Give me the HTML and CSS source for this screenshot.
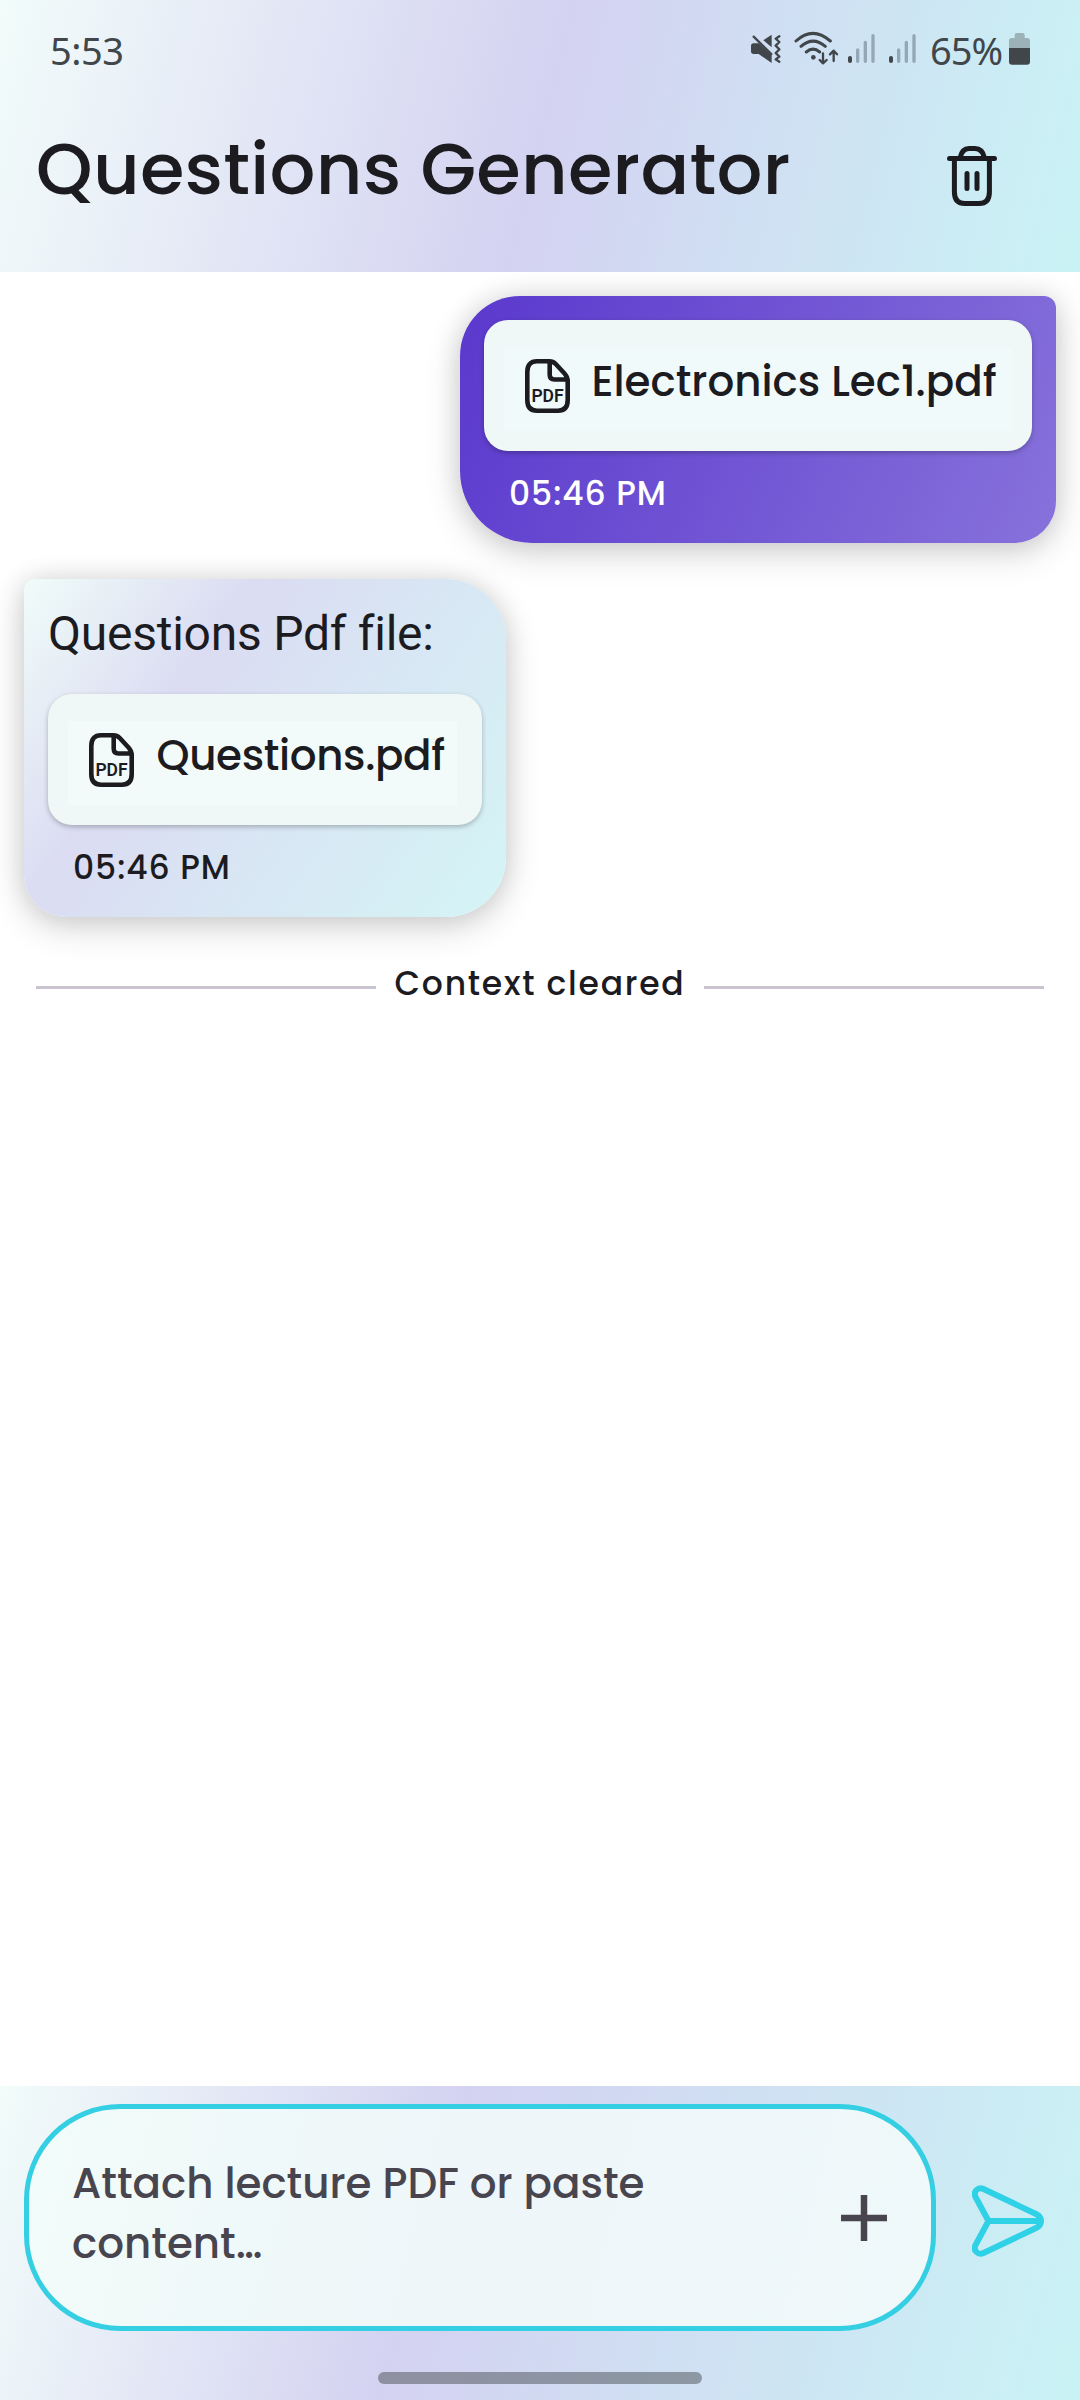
FILE: index.html
```html
<!DOCTYPE html>
<html lang="en">
<head>
<meta charset="utf-8">
<title>Questions Generator</title>
<link rel="stylesheet" href="styles.css">
</head>
<body>
<header class="header">
  <div class="status">
    <span class="clock">5:53</span>
    <div class="tray">
      <svg class="mute" viewBox="90 60 96 108">
        <path fill="currentColor" d="M93 108Q93 100 101 100H116L155 135V159L116 132H101Q93 132 93 124ZM130 91L155 74V112Z"/>
        <path fill="none" stroke="currentColor" stroke-width="7" stroke-linecap="round" stroke-linejoin="round" d="M101 80L154 132M178 79L167 86L178 96L167 107L178 118L167 129L178 140L167 148L178 155"/>
      </svg>
      <svg class="wifi" viewBox="219 60 141 108">
        <g fill="none" stroke="currentColor" stroke-width="9" stroke-linecap="round" stroke-linejoin="round">
          <path d="M228 93Q278 47 331 93M243 109Q279 78 316 109M259 126Q279 109 299 126"/>
          <path stroke-width="7" d="M309 130V160M299 150L309 160L320 150M341 153V122M330 133L341 122L351 133"/>
        </g>
        <circle cx="280" cy="142" r="7" fill="currentColor"/>
      </svg>
      <svg class="bars" viewBox="381 60 87 108">
        <path class="on" d="M390 144V153"/>
        <path class="off" d="M413 120V154M436 97V154M459 77V154"/>
      </svg>
      <svg class="bars bars-second" viewBox="381 60 87 108">
        <path class="on" d="M390 144V153"/>
        <path class="off" d="M413 120V154M436 97V154M459 77V154"/>
      </svg>
      <span class="percent">65%</span>
      <svg class="battery" viewBox="864 60 69 108">
        <path class="level-empty" d="M867 114V92Q867 84 875 84H884V75Q884 69 890 69H908Q914 69 914 75V84H922Q930 84 930 92V114Z"/>
        <path fill="currentColor" d="M867 114H930V155Q930 164 921 164H876Q867 164 867 155Z"/>
      </svg>
    </div>
  </div>
  <div class="titlebar">
    <h1>Questions Generator</h1>
    <svg class="trash" viewBox="0 0 50 60" fill="none" stroke="currentColor" stroke-width="5" stroke-linecap="round">
      <path d="M2.500 12.500H47.500M13 12Q15 2.500 22 2.500H28Q35.500 2.500 37.500 12M7.400 13V46Q7.400 57.500 18 57.500H32Q42.400 57.500 42.400 46V13M20 27.500V42.500M30 27.500V42.500"/>
    </svg>
  </div>
</header>

<main class="chat">
  <section class="bubble sent">
    <div class="file">
      <div class="file-inner">
        <svg class="pdf" viewBox="0 0 45 54">
          <path d="M12 2.300H24.500Q28 2.300 30.500 4.800L39.500 14.500Q42.700 18 42.700 22V41Q42.700 51.700 33 51.700H12Q2.300 51.700 2.300 41V13Q2.300 2.300 12 2.300ZM24.700 2.500V15.500Q24.700 20.500 29.500 20.500H42"/>
          <text x="6.500" y="43" textLength="32" lengthAdjust="spacing">PDF</text>
        </svg>
        <span class="name">Electronics Lec1.pdf</span>
      </div>
    </div>
    <time>05:46 PM</time>
  </section>
  <section class="bubble received">
    <p>Questions Pdf file:</p>
    <div class="file">
      <div class="file-inner">
        <svg class="pdf" viewBox="0 0 45 54">
          <path d="M12 2.300H24.500Q28 2.300 30.500 4.800L39.500 14.500Q42.700 18 42.700 22V41Q42.700 51.700 33 51.700H12Q2.300 51.700 2.300 41V13Q2.300 2.300 12 2.300ZM24.700 2.500V15.500Q24.700 20.500 29.500 20.500H42"/>
          <text x="6.500" y="43" textLength="32" lengthAdjust="spacing">PDF</text>
        </svg>
        <span class="name">Questions.pdf</span>
      </div>
    </div>
    <time>05:46 PM</time>
  </section>
  <div class="cleared"><span>Context cleared</span></div>
</main>

<footer class="composer">
  <div class="row">
    <div class="input">
      <div class="placeholder">Attach lecture PDF or paste<br>content<span class="dots">...</span></div>
      <svg class="plus" viewBox="0 0 46 46" stroke="currentColor" stroke-width="6.500"><path d="M0 23H46M23 0V46"/></svg>
    </div>
    <svg class="send" viewBox="0 0 72 72" fill="none" stroke="currentColor" stroke-width="6" stroke-linejoin="round">
      <path d="M11.500 4L64 29Q69 31.500 69 36T64 43L11.500 68Q7.500 70 4.500 67T3.500 60L16.500 36L3.500 12Q1.500 8 4.500 5T11.500 4ZM16.500 36H68"/>
    </svg>
  </div>
  <div class="home"></div>
</footer>
</body>
</html>
```
FILE: styles.css
```css
* { box-sizing: border-box; margin: 0; }

body {
  width: 1080px;
  height: 2400px;
  display: flex;
  flex-direction: column;
  background: #fff;
  color: #1c1b1f;
  font-family: Poppins, Inter, sans-serif;
  font-weight: 500;
  font-feature-settings: "cv11";
  overflow: hidden;
}

svg { display: block; flex: none; }

/* Header */
.header {
  height: 272px;
  flex: none;
  background: linear-gradient(104.1deg, #f2fcfa, #d4d2f1 50%, #c9f3f5);
}
.status {
  height: 102px;
  padding: 0 49px 0 50px;
  display: flex;
  align-items: center;
  justify-content: space-between;
  color: #40464a;
  font: 400 38px/52px "Noto Sans", sans-serif;
}
.clock { margin-top: -3px; letter-spacing: -.5px; }
.tray { display: flex; align-items: center; height: 36px; margin-top: -6px; }
.mute { width: 32px; height: 36px; }
.wifi { width: 47px; height: 36px; margin-left: 11px; }
.bars { width: 29px; height: 36px; margin-left: 7px; fill: none; stroke-linecap: round; }
.bars-second { margin-left: 12px; }
.on { stroke: #40464a; stroke-width: 12px; }
.off { stroke: #94a8b3; stroke-width: 10px; }
.percent { width: 78px; margin: 3px 0 0 13px; letter-spacing: -1px; }
.battery { width: 23px; height: 36px; }
.level-empty { fill: #9bb2b9; }
.titlebar {
  display: flex;
  justify-content: space-between;
  padding: 25px 83px 0 36px;
}
h1 { font-size: 72px; line-height: 84px; font-weight: 500; letter-spacing: .25px; }
.trash { width: 50px; height: 60px; margin-top: 19px; }

/* Messages */
.chat {
  flex: 1;
  display: flex;
  flex-direction: column;
  align-items: flex-start;
  padding: 24px 24px 0;
  overflow: hidden;
}
.bubble {
  padding: 24px;
  box-shadow: 0 10px 36px rgba(0, 0, 0, .16), 0 0 26px rgba(0, 0, 0, .11);
}
.sent {
  align-self: flex-end;
  width: 596px;
  height: 247px;
  border-radius: 60px 12px 42px 72px;
  background: linear-gradient(112.5deg, #5a38cd, #8772db);
}
.received {
  width: 482px;
  height: 338px;
  margin-top: 36px;
  border-radius: 12px 60px 60px 42px;
  background: linear-gradient(125deg, #f0fcf9, #dbdcf2 32%, #d4f5f6);
}
.received p {
  font: 400 48px/66px Roboto, sans-serif;
  letter-spacing: -.25px;
  height: 91px;
  margin-top: -2px;
  margin-bottom: 2px;
  white-space: nowrap;
}
.file {
  height: 131px;
  border-radius: 24px;
  padding: 27px 20px 20px;
  background: #eff7f7;
  box-shadow: 0 2px 5px rgba(0, 0, 0, .25);
}
.file-inner {
  height: 84px;
  padding: 12px 0 0 20px;
  display: flex;
  background: #f1fafb;
}
.received .file { padding-right: 25px; }
.received .file-inner { background: #f2fbfa; }
.pdf { width: 45px; height: 54px; margin-left: .5px; }
.pdf path { fill: none; stroke: currentColor; stroke-width: 4.6px; stroke-linejoin: round; }
.pdf text { font: 600 17.5px Roboto, sans-serif; fill: currentColor; }
.name { margin-left: 22px; font-size: 42px; line-height: 46px; white-space: nowrap; }
.received .name { margin-left: 23px; letter-spacing: -.35px; }
time { display: block; margin: 23px 0 0 25px; font-size: 33px; line-height: 40px; letter-spacing: .95px; }
.sent time { color: #fff; }

.cleared {
  align-self: stretch;
  display: flex;
  align-items: center;
  margin: 50px 12px 0;
  height: 41px;
}
.cleared::before, .cleared::after {
  content: "";
  width: 340px;
  height: 3px;
  background: #cac4d0;
}
.cleared span {
  flex: 1;
  text-align: center;
  font-size: 33px;
  line-height: 40px;
  padding-bottom: 7px;
  letter-spacing: 1.75px;
  white-space: nowrap;
}

/* Composer */
.composer {
  height: 314px;
  flex: none;
  padding: 18px 36px 0 24px;
  background: linear-gradient(106.2deg, #f2fcfa, #d4d2f1 40%, #c9f3f5);
}
.row { display: flex; justify-content: space-between; align-items: center; }
.input {
  width: 912px;
  height: 227px;
  padding: 45px 44px 0 43px;
  display: flex;
  justify-content: space-between;
  border: 5px solid #35cfe3;
  border-radius: 96px;
  background: linear-gradient(104deg, #f2fcf9, #eef6f9 50%, #f0f9fa);
  color: #49454f;
}
.placeholder { font-size: 42px; line-height: 60px; white-space: nowrap; }
.dots { letter-spacing: -1.7px; }
.plus { width: 46px; height: 46px; margin-top: 41px; }
.send { width: 72px; height: 72px; color: #2fd1e6; margin-top: 7px; }
.home { width: 324px; height: 12px; margin: 41px 0 0 354px; border-radius: 6px; background: rgba(79, 85, 90, .52); }
```
